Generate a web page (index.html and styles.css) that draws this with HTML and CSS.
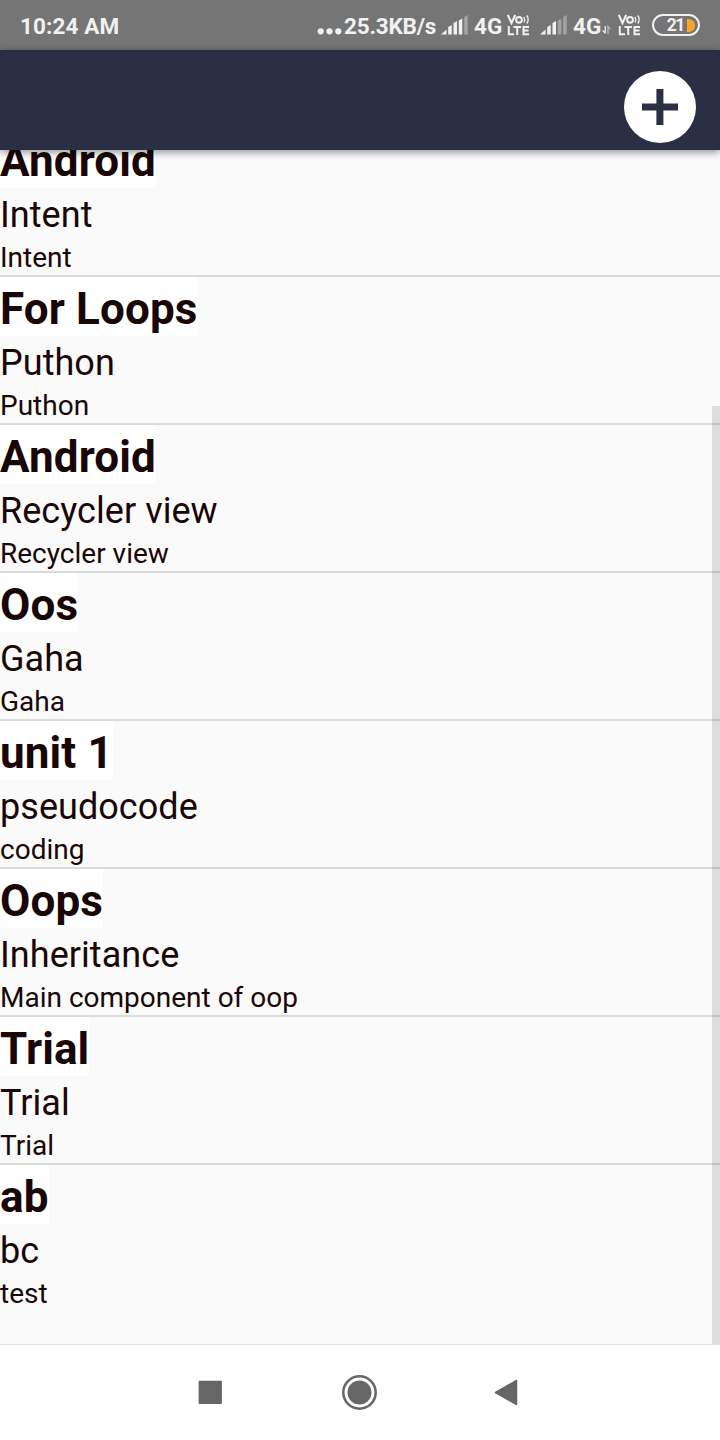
FILE: index.html
```html
<!DOCTYPE html>
<html lang="en">
<head>
<meta charset="utf-8">
<title>Notes</title>
<link rel="stylesheet" href="styles.css">
</head>
<body>
<div class="screen">
  <header class="status">
    <span class="clock">10:24 AM</span>
    <svg class="dots" width="26" height="50" viewBox="0 0 26 50"><g fill="#f1f1f1"><circle cx="3.7" cy="31.3" r="3.1"/><circle cx="12.5" cy="31.3" r="3.1"/><circle cx="21.3" cy="31.3" r="3.1"/></g></svg>
    <span class="speed">25.3KB/s</span>
    <svg class="signal" width="30" height="50" viewBox="0 0 30 50"><path fill="#f1f1f1" d="M0 34.500 5.500 29.500v5zM7.200 27l3.500-2v9.500H7.200zM12.500 23l3.500-2v13.500h-3.500zM17.800 20.500l3.500-2v16h-3.500z"/><path fill="#a3a3a3" d="M23.200 17l3.500-2v19.500h-3.500z"/></svg>
    <span class="net">4G</span>
    <svg class="volte" width="24" height="50" viewBox="0 0 24 50"><g fill="none" stroke="#f1f1f1" stroke-width="2"><path d="M.8 15l3.700 8L8.200 15"/><path stroke-width="1.400" d="M17 17q1.500 2.700 0 5.400M19.800 15.500q2.800 4 0 8"/><circle cx="12" cy="19.800" r="2.900"/><path d="M1.800 26v8.200H7M6.500 27H14M10.200 27v8M22 27h-5.500v7.200H22M16.500 30.600h5"/></g></svg>
    <svg class="signal signal-two" width="30" height="50" viewBox="0 0 30 50"><path fill="#f1f1f1" d="M0 34.500 5.500 29.500v5zM7.200 27l3.500-2v9.500H7.200zM12.500 23l3.500-2v13.500h-3.500z"/><path fill="#a3a3a3" d="M17.800 20.500l3.500-2v16h-3.500zM23.200 17l3.500-2v19.500h-3.500z"/></svg>
    <span class="net">4G</span>
    <svg class="arrows" width="10" height="50" viewBox="0 0 10 50"><path fill="none" stroke="#e0e0e0" stroke-width="1.500" d="M3.300 26v7.500M.8 30.500 3.300 33.300"/><path fill="none" stroke="#b0b0b0" stroke-width="1.500" d="M6 34v-7.500l2.300 2.800"/></svg>
    <svg class="volte volte-two" width="24" height="50" viewBox="0 0 24 50"><g fill="none" stroke="#f1f1f1" stroke-width="2"><path d="M.8 15l3.700 8L8.200 15"/><path stroke-width="1.400" d="M17 17q1.500 2.700 0 5.400M19.800 15.500q2.800 4 0 8"/><circle cx="12" cy="19.800" r="2.900"/><path d="M1.800 26v8.200H7M6.500 27H14M10.200 27v8M22 27h-5.500v7.200H22M16.500 30.600h5"/></g></svg>
    <span class="battery"><span class="level">21</span><svg class="charge" width="8" height="13" viewBox="0 0 8 13"><path fill="#f9a825" d="M0 0h2q6 1 6 6.500T2 13H0z"/></svg></span>
  </header>
  <div class="toolbar">
    <svg class="add" width="72" height="72" viewBox="0 0 72 72"><circle cx="36" cy="36" r="36" fill="#fff"/><path fill="#2b2f43" d="M32.400 18h7v14.500H54v7H39.400V54h-7V39.500H18v-7h14.400z"/></svg>
  </div>
  <main class="list">
    <div class="rows">
      <article class="note"><h2>Android</h2><p class="topic">Intent</p><p class="detail">Intent</p></article>
      <article class="note"><h2>For Loops</h2><p class="topic">Puthon</p><p class="detail">Puthon</p></article>
      <article class="note"><h2>Android</h2><p class="topic">Recycler view</p><p class="detail">Recycler view</p></article>
      <article class="note"><h2>Oos</h2><p class="topic">Gaha</p><p class="detail">Gaha</p></article>
      <article class="note"><h2>unit 1</h2><p class="topic">pseudocode</p><p class="detail">coding</p></article>
      <article class="note"><h2>Oops</h2><p class="topic">Inheritance</p><p class="detail">Main component of oop</p></article>
      <article class="note"><h2>Trial</h2><p class="topic">Trial</p><p class="detail">Trial</p></article>
      <article class="note"><h2>ab</h2><p class="topic">bc</p><p class="detail">test</p></article>
    </div>
    <div class="scrollbar"></div>
  </main>
  <nav class="navbar">
    <svg width="24" height="24" viewBox="0 0 24 24"><rect x=".6" y=".7" width="23.300" height="23.300" rx="1" fill="#666"/></svg>
    <svg class="home" width="36" height="36" viewBox="0 0 36 36"><circle cx="17.500" cy="18.500" r="16.200" fill="none" stroke="#666" stroke-width="2.500"/><circle cx="17.500" cy="18.500" r="12" fill="#666"/></svg>
    <svg width="24" height="28" viewBox="0 0 24 28"><path fill="#666" stroke="#666" stroke-width="1.500" stroke-linejoin="round" d="M1.500 14.500 22.500 2.500v24z"/></svg>
  </nav>
</div>
</body>
</html>
```
FILE: styles.css
```css
* { box-sizing: border-box; }
body { margin: 0; font-family: Roboto, sans-serif; background: #fafafa; }
svg { display: block; flex: none; }
.screen { width: 720px; height: 1440px; display: flex; flex-direction: column; overflow: hidden; }
.status { height: 50px; flex: none; display: flex; background: #757575; color: #f1f1f1; font-size: 22.5px; font-weight: 700; line-height: 52px; white-space: nowrap; }
.clock { width: 297px; margin-left: 20px; letter-spacing: .1px; flex: none; }
.dots { width: 26px; }
.speed { width: 98px; padding-left: 1px; letter-spacing: -.2px; flex: none; }
.signal-two { margin-left: 9px; }
.net { width: 33px; margin-left: 3px; flex: none; }
.volte-two { margin-left: 6px; }
.arrows { margin-left: -4px; }
.battery { width: 48px; height: 22px; margin: 14px 0 0 10px; flex: none; border: 2px solid #f1f1f1; border-radius: 11px; display: flex; align-items: center; justify-content: flex-end; padding-right: 3px; gap: 3px; font-size: 17.5px; line-height: 18px; letter-spacing: -1.4px; }
.toolbar { height: 100px; flex: none; display: flex; justify-content: flex-end; padding: 21px 24px 0 0; background: #2b2f43; box-shadow: 0 2px 8px rgba(0, 0, 0, .45); position: relative; z-index: 1; }
.list { height: 1194px; flex: none; position: relative; overflow: hidden; background: #fafafa; }
.rows { margin-top: -21px; color: #190707; }
.note { height: 148px; border-bottom: 2px solid #dadada; display: flex; flex-direction: column; align-items: flex-start; }
.note:last-child { border-bottom: 0; }
h2, p { margin: 0; white-space: nowrap; }
h2 { height: 59px; padding-top: 5px; font-size: 44px; line-height: 54px; letter-spacing: .12px; font-weight: 700; background: #fff; }
.topic { height: 49px; padding-top: 5px; font-size: 36px; line-height: 45px; letter-spacing: .05px; }
.detail { height: 38px; padding-top: 3px; font-size: 28px; line-height: 35px; }
.scrollbar { position: absolute; right: 0; top: 256px; width: 8px; height: 938px; background: rgba(0, 0, 0, .11); }
.navbar { height: 96px; flex: none; border-top: 1px solid #e3e3e3; background: #fff; display: flex; align-items: center; justify-content: space-between; padding: 0 202px 1px 198px; }
.home { margin-left: 3px; }
```
